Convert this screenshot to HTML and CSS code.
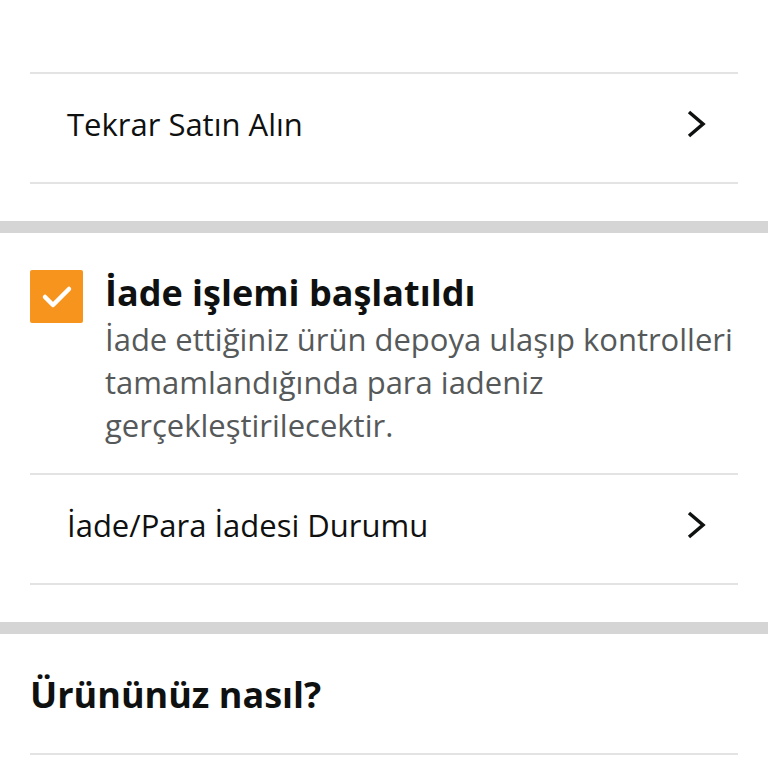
FILE: index.html
```html
<!DOCTYPE html>
<html lang="tr">
<head>
    <meta charset="UTF-8">
    <meta name="viewport" content="width=device-width, initial-scale=1.0">
    <title>Sipariş Ayrıntıları</title>
    <link rel="stylesheet" href="styles.css">
</head>
<body>

    <section class="panel panel-first">
        <a class="row" href="#">
            <span>Tekrar Satın Alın</span>
            <svg class="chevron" viewBox="0 0 20 28"><polyline points="3,2 17,14 3,26"/></svg>
        </a>
    </section>

    <div class="band"></div>

    <section class="panel">
        <div class="status">
            <span class="checkbox">
                <svg viewBox="0 0 53 53"><polyline points="15,27 23,35 39,19"/></svg>
            </span>
            <div class="status-text">
                <h3>İade işlemi başlatıldı</h3>
                <p>İade ettiğiniz ürün depoya ulaşıp kontrolleri tamamlandığında para iadeniz gerçekleştirilecektir.</p>
            </div>
        </div>
        <a class="row" href="#">
            <span>İade/Para İadesi Durumu</span>
            <svg class="chevron" viewBox="0 0 20 28"><polyline points="3,2 17,14 3,26"/></svg>
        </a>
    </section>

    <div class="band"></div>

    <section class="panel">
        <h2 class="review-title">Ürününüz nasıl?</h2>
    </section>

</body>
</html>
```

FILE: styles.css
```css
* { margin: 0; padding: 0; box-sizing: border-box; }
body { background: #fff; font-family: "Open Sans", Arial, sans-serif; color: #0f1111; }
.panel { padding: 0 30px 37px; }
.panel-first { padding-top: 72px; }
.band { height: 12px; background: #d5d5d5; }
.row { display: flex; justify-content: space-between; align-items: center; height: 112px; padding: 0 32px 8px 37px; border-top: 2px solid #e3e3e3; border-bottom: 2px solid #e3e3e3; color: #0f1111; text-decoration: none; font-size: 31px; }
.chevron { width: 20px; height: 28px; fill: none; stroke: #0f1111; stroke-width: 3.5; }
.status { display: flex; gap: 22px; padding: 35px 0 26px; }
.checkbox { flex: none; width: 53px; height: 53px; margin-top: 2px; background: #f7941d; border-radius: 2px; }
.checkbox svg { display: block; width: 53px; height: 53px; fill: none; stroke: #fff; stroke-width: 4.5; stroke-linecap: round; stroke-linejoin: round; }
.status-text { margin-right: -6px; }
.status-text h3 { font-size: 36px; font-weight: 700; line-height: 50px; }
.status-text p { font-size: 31px; line-height: 43px; color: #565959; }
.review-title { height: 121px; display: flex; align-items: center; border-bottom: 2px solid #e3e3e3; font-size: 36px; font-weight: 700; padding-top: 2px; }
```
